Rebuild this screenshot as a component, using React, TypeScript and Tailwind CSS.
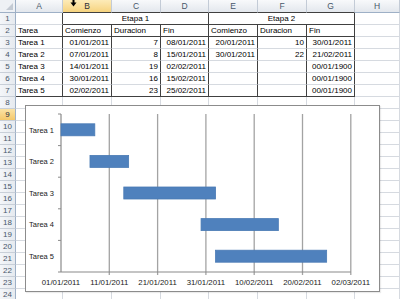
import React from 'react'

const COLS = ['A', 'B', 'C', 'D', 'E', 'F', 'G', 'H']

const tasks = [
  { name: 'Tarea 1', start: '01/01/2011', dur: 7, end: '08/01/2011', off: 0 },
  { name: 'Tarea 2', start: '07/01/2011', dur: 8, end: '15/01/2011', off: 6 },
  { name: 'Tarea 3', start: '14/01/2011', dur: 19, end: '02/02/2011', off: 13 },
  { name: 'Tarea 4', start: '30/01/2011', dur: 16, end: '15/02/2011', off: 29 },
  { name: 'Tarea 5', start: '02/02/2011', dur: 23, end: '25/02/2011', off: 32 },
]

// Etapa 2 columns (Comienzo, Duracion, Fin)
const etapa2 = [
  ['20/01/2011', '10', '30/01/2011'],
  ['30/01/2011', '22', '21/02/2011'],
  ['', '', '00/01/1900'],
  ['', '', '00/01/1900'],
  ['', '', '00/01/1900'],
]

const axisDates = ['01/01/2011', '11/01/2011', '21/01/2011', '31/01/2011', '10/02/2011', '20/02/2011', '02/03/2011']

function C({
  children,
  r = false,
  b = false,
  align = 'left',
  span = '',
}: {
  children?: React.ReactNode
  r?: boolean
  b?: boolean
  align?: 'left' | 'right' | 'center'
  span?: string
}) {
  const j = align === 'right' ? 'justify-end pr-[2px]' : align === 'center' ? 'justify-center' : 'justify-start pl-[2px]'
  return (
    <div
      className={`flex items-center overflow-hidden whitespace-nowrap border-r border-b ${r ? 'border-r-[#404040]' : 'border-r-[#d6dae0]'} ${
        b ? 'border-b-[#404040]' : 'border-b-[#d6dae0]'
      } ${j} ${span}`}
    >
      {children}
    </div>
  )
}

function RowHead({ n, active = false }: { n: number; active?: boolean }) {
  return (
    <div
      className={`flex items-center justify-center border-r border-b border-r-[#9eb0c6] border-b-[#c8cfd8] text-[8px] ${
        active ? 'bg-gradient-to-b from-[#fbe3a5] to-[#f4c86a] text-[#1f2a38]' : 'bg-gradient-to-r from-[#f4f6f9] to-[#e6eaef] text-[#48576a]'
      }`}
    >
      {n}
    </div>
  )
}

function Chart() {
  const x0 = 35
  const day = 4.83
  const top = 8
  const cat = 31.6
  const bottom = top + cat * 5
  return (
    <div className="absolute left-[25px] top-[105px] h-[187px] w-[355px] border border-[#8c8c8c] bg-white shadow-[1px_1px_1px_rgba(0,0,0,0.08)]">
      <svg width="353" height="185" className="block" style={{ fontFamily: '"Liberation Sans", Arial, sans-serif' }}>
        {axisDates.map((d, k) => {
          const x = x0 + k * 48.3
          return (
            <g key={d}>
              {k > 0 && <line x1={x} y1={top} x2={x} y2={bottom + 3} stroke="#a3a3a3" strokeWidth="1.3" />}
              <text x={x} y={179} fontSize="7.8" textAnchor="middle" fill="#1a1a1a">
                {d}
              </text>
            </g>
          )
        })}
        <line x1={x0} y1={top} x2={x0} y2={bottom} stroke="#8a8a8a" strokeWidth="1.2" />
        <line x1={x0} y1={bottom} x2={x0 + 6 * 48.3} y2={bottom} stroke="#8a8a8a" strokeWidth="1.2" />
        {[0, 1, 2, 3, 4, 5].map((i) => (
          <line key={i} x1={x0 - 3} y1={top + i * cat} x2={x0} y2={top + i * cat} stroke="#8a8a8a" strokeWidth="1" />
        ))}
        {tasks.map((t, i) => {
          const cy = top + (i + 0.5) * cat
          return (
            <g key={t.name}>
              <text x={28} y={cy + 2.7} fontSize="7.5" textAnchor="end" fill="#1a1a1a">
                {t.name}
              </text>
              <rect x={x0 + t.off * day} y={cy - 6} width={t.dur * day} height={12} fill="#4f81bd" stroke="#4a7bb5" strokeWidth="0.8" />
            </g>
          )
        })}
      </svg>
    </div>
  )
}

export default function App() {
  const emptyRows = Array.from({ length: 17 }, (_, i) => i + 8)
  return (
    <div
      className="relative h-[299px] w-[400px] overflow-hidden bg-white text-[8px] text-black"
      style={{ fontFamily: '"Liberation Sans", Arial, sans-serif' }}
    >
      <div className="grid grid-cols-[16px_47px_49px_49px_48px_49px_49px_48px_1fr] grid-rows-[13px_repeat(24,12px)]">
        {/* select-all corner */}
        <div className="relative border-r border-b border-r-[#9eb0c6] border-b-[#9eb0c6] bg-[#eef1f5]">
          <svg className="absolute right-[2px] bottom-[2px]" width="7" height="7" viewBox="0 0 7 7">
            <path d="M7 0 L7 7 L0 7 Z" fill="#c3cad3" />
          </svg>
        </div>
        {COLS.map((c, i) => (
          <div
            key={c}
            className={`flex items-center justify-center border-r border-b border-r-[#c3cbd6] text-[8.5px] ${
              i >= 1 && i <= 6 ? 'border-b-[#404040]' : 'border-b-[#9eb0c6]'
            } ${c === 'B' ? 'bg-gradient-to-b from-[#fdebb8] to-[#f6d37e] text-[#2a2f38]' : 'bg-gradient-to-b from-[#f8f9fb] to-[#e3e7ed] text-[#48576a]'}`}
          >
            {c}
          </div>
        ))}

        {/* row 1 */}
        <RowHead n={1} />
        <C r />
        <C r b align="center" span="col-span-3">
          Etapa 1
        </C>
        <C r b align="center" span="col-span-3">
          Etapa 2
        </C>
        <C />

        {/* row 2 */}
        <RowHead n={2} />
        <C r b>Tarea</C>
        <C r b>Comienzo</C>
        <C r b>Duracion</C>
        <C r b>Fin</C>
        <C r b>Comienzo</C>
        <C r b>Duracion</C>
        <C r b>Fin</C>
        <C />

        {/* rows 3-7 */}
        {tasks.map((t, i) => {
          const last = i === tasks.length - 1
          const e = etapa2[i]
          return (
            <React.Fragment key={t.name}>
              <RowHead n={i + 3} />
              <C r b={last}>{t.name}</C>
              <C r b={last} align="right">{t.start}</C>
              <C r b={last} align="right">{t.dur}</C>
              <C r b={last} align="right">{t.end}</C>
              <C r b={last} align="right">{e[0]}</C>
              <C r b={last} align="right">{e[1]}</C>
              <C r b={last} align="right">{e[2]}</C>
              <C />
            </React.Fragment>
          )
        })}

        {/* rows 8-24 */}
        {emptyRows.map((n) => (
          <React.Fragment key={n}>
            <RowHead n={n} active={n === 9} />
            {COLS.map((c) => (
              <C key={c} />
            ))}
          </React.Fragment>
        ))}
      </div>

      <Chart />

      {/* mouse cursor over column B header */}
      <svg className="absolute left-[70px] top-0" width="7" height="7" viewBox="0 0 7 7">
        <rect x="2.5" y="0" width="2" height="3" fill="#000" />
        <path d="M0.5 2.5 L6.5 2.5 L3.5 6.5 Z" fill="#000" />
      </svg>
    </div>
  )
}
